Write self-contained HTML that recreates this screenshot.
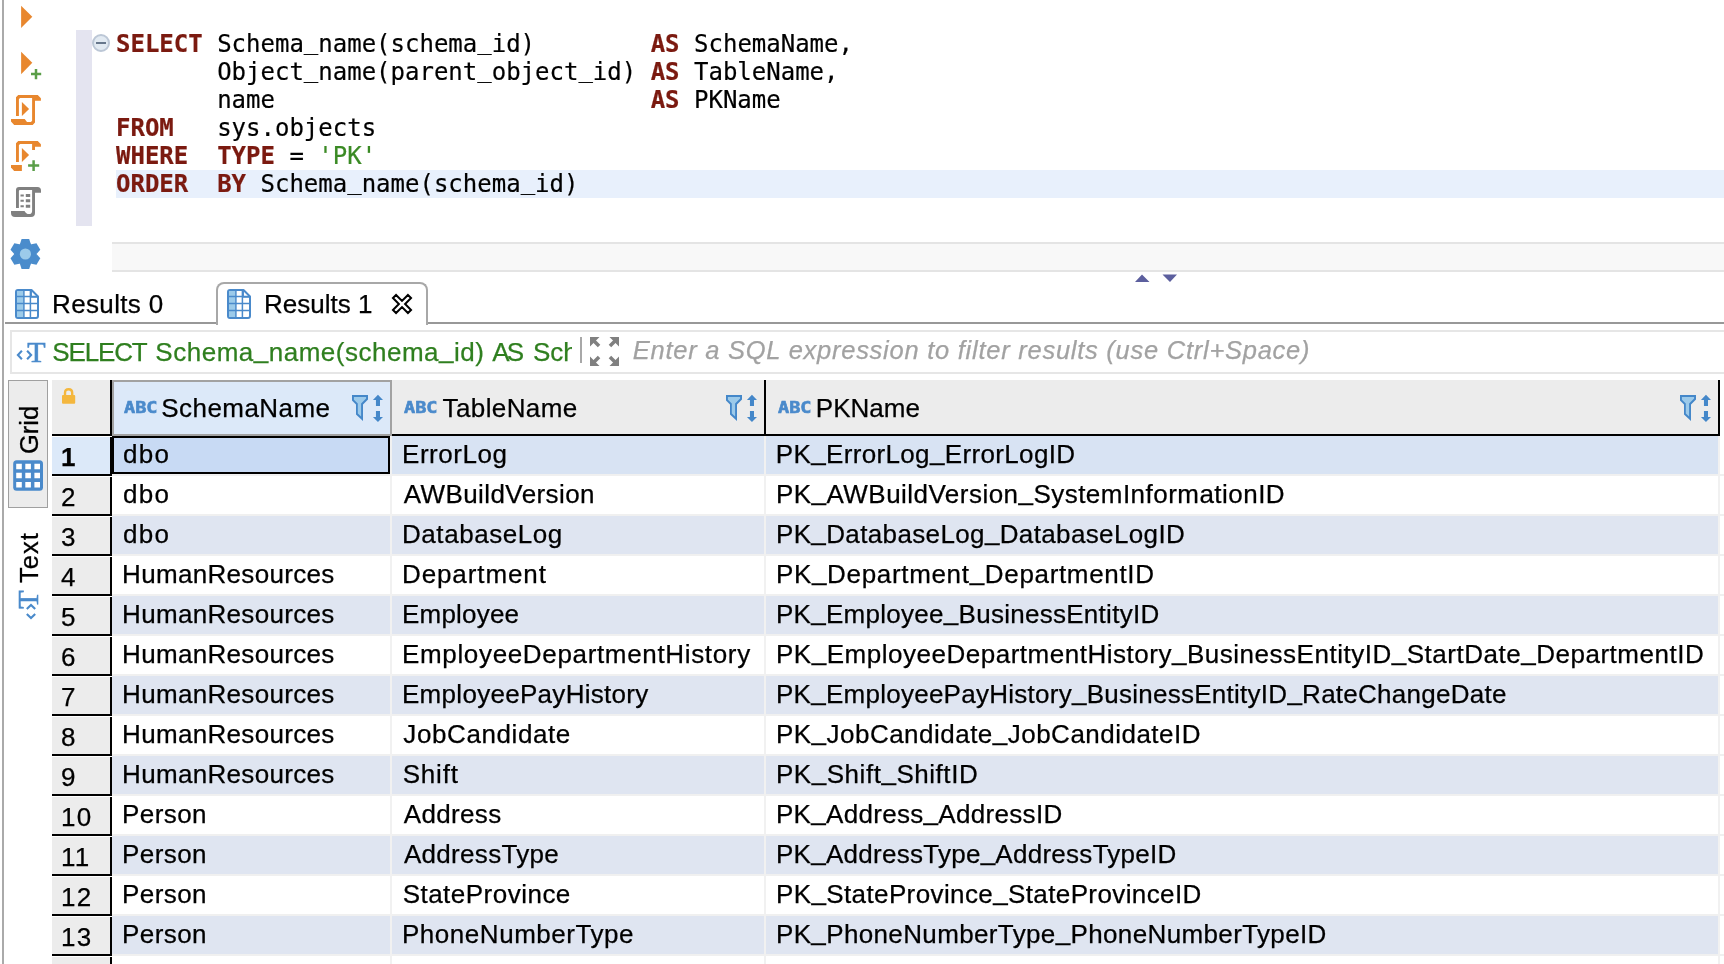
<!DOCTYPE html>
<html><head><meta charset="utf-8"><title>SQL Results</title>
<style>
html,body{margin:0;padding:0;background:#fff;}
body{will-change:transform;width:1724px;height:964px;overflow:hidden;position:relative;font-family:"Liberation Sans",sans-serif;color:#000;}
.abs{position:absolute;}
#vline{left:2px;top:0;width:2px;height:964px;background:#aaa;}
#gutter{left:76px;top:30px;width:16px;height:196px;background:#e4e4f0;}
#curline{left:116px;top:170px;width:1608px;height:28px;background:#e8f0fc;}
#code{-webkit-text-stroke:0.2px;left:116px;top:30px;font-family:"DejaVu Sans Mono","Liberation Mono",monospace;font-size:24px;line-height:28px;white-space:pre;color:#000;margin:0;}
#code b{color:#7b1a10;font-weight:bold;}
#code i{color:#3a8a24;font-style:normal;}
#hbar{left:112px;top:242px;width:1612px;height:26px;background:#f8f8f8;border-top:2px solid #e4e4e4;border-bottom:2px solid #e4e4e4;}
.ui{-webkit-text-stroke:0.25px;font-size:26px;white-space:nowrap;line-height:30px;}
#tabline1{left:5px;top:322px;width:213px;height:2px;background:#989898;}
#tabline2{left:427px;top:322px;width:1297px;height:2px;background:#989898;}
#tab1{left:216px;top:282px;width:208px;height:41px;border:2px solid #a8a8a8;border-bottom:none;border-radius:8px 8px 0 0;background:#fff;}
#filter{left:10px;top:330px;width:1720px;height:40px;border:2px solid #e6e6e6;background:#fff;}

#gridbg{left:112px;top:436px;width:1612px;height:528px;background:repeating-linear-gradient(to bottom,transparent 0,transparent 38px,#f0f0f0 38px,#f0f0f0 40px);}
.row{-webkit-text-stroke:0.25px;position:absolute;left:112px;width:1606px;height:38px;background:#fff;font-size:26px;line-height:30px;white-space:nowrap;}
.row.odd{background:#dfe5f1;}
.row.sel{background:#d8e3f3;}
.row span{position:absolute;top:3px;z-index:2;}
.c1{left:9px;}
.c2{left:289px;}
.c3{left:663px;}
.rn{position:absolute;left:-60px;top:1px;width:49px;height:34px;padding-left:9px;letter-spacing:1.3px;padding-top:3px;background:#ececec;border-right:2px solid #000;border-bottom:2px solid #000;line-height:34.5px;}
.row.sel .rn{background:#dce9f9;font-weight:bold;}
.vsep{top:436px;width:2px;height:528px;background:#f1f1f1;}
#selcell{z-index:1;left:112px;top:436px;width:274px;height:34px;border:2px solid #000;background:#c8daf4;}
#rnhead{left:52px;top:380px;width:58px;height:54px;background:#ececec;border-right:2px solid #000;border-bottom:2px solid #000;}
.hd{-webkit-text-stroke:0.25px;top:380px;height:54px;background:#ececec;border-bottom:2px solid #000;font-size:26px;line-height:30px;white-space:nowrap;}
.hd .lbl{position:absolute;top:13.45px;}
.abc{position:absolute;top:18.5px;font-family:"DejaVu Sans Mono",monospace;font-weight:bold;font-size:16px;line-height:18px;color:#4a8acb;letter-spacing:0px;-webkit-text-stroke:0.6px #4a8acb;display:inline-block;transform:scaleX(1.16);transform-origin:0 0;}
#h1{left:112px;width:276px;height:52px;background:#dce9f9;border:2px solid #a2a2a2;}
#h2{left:392px;width:372px;border-right:2px solid #000;}
#h3{left:766px;width:952px;border-right:2px solid #000;}
#gridtab{left:8px;top:380px;width:38px;height:126px;background:#ececec;border:1px solid #a0a0a0;}
.vtxt{-webkit-text-stroke:0.3px;font-size:25.5px;line-height:30px;white-space:nowrap;transform:rotate(-90deg);transform-origin:0 0;}
.g{position:absolute;top:0;}
u{text-decoration:none;position:relative;top:-3px;}
#code u{top:-3.5px;}
</style></head><body>
<div id="vline" class="abs"></div>
<div id="gutter" class="abs"></div>
<div id="curline" class="abs"></div>
<pre id="code" class="abs"><b>SELECT</b> Schema<u>_</u>name(schema<u>_</u>id)        <b>AS</b> SchemaName,
       Object<u>_</u>name(parent<u>_</u>object<u>_</u>id) <b>AS</b> TableName,
       name                          <b>AS</b> PKName
<b>FROM</b>   sys.objects
<b>WHERE</b>  <b>TYPE</b> = <i>'PK'</i>
<b>ORDER</b>  <b>BY</b> Schema<u>_</u>name(schema<u>_</u>id)</pre>
<div id="hbar" class="abs"></div>
<div id="tabline1" class="abs"></div>
<div id="tabline2" class="abs"></div>
<div id="tab1" class="abs"></div>
<div class="abs ui" id="t0" style="left:52.11px;top:289.35px;letter-spacing:0.343px">Results 0</div>
<div class="abs ui" id="t1" style="left:263.93px;top:289.35px;letter-spacing:0.009px">Results 1</div>
<div id="filter" class="abs"></div>
<div id="gridbg" class="abs"></div>
<div id="gridtab" class="abs"></div>
<div class="abs vtxt" style="left:13.8px;top:454px;">Grid</div>
<div class="abs vtxt" style="left:13.9px;top:583.2px;letter-spacing:1px">Text</div>
<div id="rnhead" class="abs"></div>
<div id="h1" class="abs hd"><span class="abc" style="left:10px;top:16.5px">ABC</span><span class="lbl" id="lbl1" style="left:47.28px;top:11.45px;letter-spacing:0.448px">SchemaName</span></div>
<div id="h2" class="abs hd"><span class="abc" style="left:12px">ABC</span><span class="lbl" id="lbl2" style="left:50.55px;letter-spacing:0.391px">TableName</span></div>
<div id="h3" class="abs hd"><span class="abc" style="left:12px">ABC</span><span class="lbl" id="lbl3" style="left:49.76px;letter-spacing:0.048px">PKName</span></div>
<!--ROWS_START--><div id="grid" class="abs">
<div class="row sel" style="top:436px"><div class="rn">1</div><span id="r1c1" style="left:11.01px;letter-spacing:1.280px">dbo</span><span id="r1c2" style="left:290.00px;letter-spacing:0.553px">ErrorLog</span><span id="r1c3" style="left:663.74px;letter-spacing:0.352px">PK<u>_</u>ErrorLog<u>_</u>ErrorLogID</span></div>
<div class="row" style="top:476px"><div class="rn">2</div><span id="r2c1" style="left:10.88px;letter-spacing:1.341px">dbo</span><span id="r2c2" style="left:291.72px;letter-spacing:0.414px">AWBuildVersion</span><span id="r2c3" style="left:663.93px;letter-spacing:0.468px">PK<u>_</u>AWBuildVersion<u>_</u>SystemInformationID</span></div>
<div class="row odd" style="top:516px"><div class="rn">3</div><span id="r3c1" style="left:10.89px;letter-spacing:1.331px">dbo</span><span id="r3c2" style="left:289.99px;letter-spacing:0.563px">DatabaseLog</span><span id="r3c3" style="left:663.94px;letter-spacing:0.363px">PK<u>_</u>DatabaseLog<u>_</u>DatabaseLogID</span></div>
<div class="row" style="top:556px"><div class="rn">4</div><span id="r4c1" style="left:10.04px;letter-spacing:0.325px">HumanResources</span><span id="r4c2" style="left:289.99px;letter-spacing:0.897px">Department</span><span id="r4c3" style="left:663.93px;letter-spacing:0.671px">PK<u>_</u>Department<u>_</u>DepartmentID</span></div>
<div class="row odd" style="top:596px"><div class="rn">5</div><span id="r5c1" style="left:10.04px;letter-spacing:0.324px">HumanResources</span><span id="r5c2" style="left:289.99px;letter-spacing:0.212px">Employee</span><span id="r5c3" style="left:663.94px;letter-spacing:0.277px">PK<u>_</u>Employee<u>_</u>BusinessEntityID</span></div>
<div class="row" style="top:636px"><div class="rn">6</div><span id="r6c1" style="left:10.04px;letter-spacing:0.325px">HumanResources</span><span id="r6c2" style="left:289.99px;letter-spacing:0.659px">EmployeeDepartmentHistory</span><span id="r6c3" style="left:663.93px;letter-spacing:0.518px">PK<u>_</u>EmployeeDepartmentHistory<u>_</u>BusinessEntityID<u>_</u>StartDate<u>_</u>DepartmentID</span></div>
<div class="row odd" style="top:676px"><div class="rn">7</div><span id="r7c1" style="left:10.04px;letter-spacing:0.324px">HumanResources</span><span id="r7c2" style="left:289.99px;letter-spacing:0.296px">EmployeePayHistory</span><span id="r7c3" style="left:663.94px;letter-spacing:0.262px">PK<u>_</u>EmployeePayHistory<u>_</u>BusinessEntityID<u>_</u>RateChangeDate</span></div>
<div class="row" style="top:716px"><div class="rn">8</div><span id="r8c1" style="left:10.04px;letter-spacing:0.325px">HumanResources</span><span id="r8c2" style="left:291.31px;letter-spacing:0.597px">JobCandidate</span><span id="r8c3" style="left:663.93px;letter-spacing:0.484px">PK<u>_</u>JobCandidate<u>_</u>JobCandidateID</span></div>
<div class="row odd" style="top:756px"><div class="rn">9</div><span id="r9c1" style="left:10.04px;letter-spacing:0.324px">HumanResources</span><span id="r9c2" style="left:290.67px;letter-spacing:0.808px">Shift</span><span id="r9c3" style="left:663.94px;letter-spacing:0.537px">PK<u>_</u>Shift<u>_</u>ShiftID</span></div>
<div class="row" style="top:796px"><div class="rn">10</div><span id="r10c1" style="left:10.04px;letter-spacing:0.434px">Person</span><span id="r10c2" style="left:291.72px;letter-spacing:0.342px">Address</span><span id="r10c3" style="left:663.93px;letter-spacing:0.310px">PK<u>_</u>Address<u>_</u>AddressID</span></div>
<div class="row odd" style="top:836px"><div class="rn">11</div><span id="r11c1" style="left:10.04px;letter-spacing:0.433px">Person</span><span id="r11c2" style="left:291.97px;letter-spacing:0.298px">AddressType</span><span id="r11c3" style="left:663.94px;letter-spacing:0.270px">PK<u>_</u>AddressType<u>_</u>AddressTypeID</span></div>
<div class="row" style="top:876px"><div class="rn">12</div><span id="r12c1" style="left:10.04px;letter-spacing:0.434px">Person</span><span id="r12c2" style="left:290.65px;letter-spacing:0.485px">StateProvince</span><span id="r12c3" style="left:663.93px;letter-spacing:0.386px">PK<u>_</u>StateProvince<u>_</u>StateProvinceID</span></div>
<div class="row odd" style="top:916px"><div class="rn">13</div><span id="r13c1" style="left:10.04px;letter-spacing:0.433px">Person</span><span id="r13c2" style="left:289.99px;letter-spacing:0.535px">PhoneNumberType</span><span id="r13c3" style="left:663.94px;letter-spacing:0.365px">PK<u>_</u>PhoneNumberType<u>_</u>PhoneNumberTypeID</span></div>
<div class="row" style="top:956px"><div class="rn">14</div></div>
</div><!--ROWS_END-->
<div class="abs vsep" style="left:390px"></div>
<div class="abs vsep" style="left:764px"></div>
<div class="abs vsep" style="left:1718px"></div>
<div id="selcell" class="abs"></div>
<!--GRID-->

<svg class="abs" style="left:0;top:0" width="60" height="280" viewBox="0 0 60 280">
<path d="M21.1,5.8 L32.3,16.8 L21.1,28 Z" fill="#e8872e"/>
<path d="M21.1,51.8 L32.3,62.8 L21.1,74.2 Z" fill="#e8872e"/>
<path d="M31,74 H41.2 M36,68.9 V79.2" stroke="#5a9e48" stroke-width="2.5" fill="none"/>
<g transform="translate(11,95)" fill="#e8872e"><path d="M7.2,0 L26.8,0 L29.9,3.2 L29.9,5.8 L24,5.8 L24,27.6 L21.7,29.9 L3.2,29.9 L0,26.6 L0,24 L13.7,24 L16,27.1 L19.9,27.1 L21.1,25.8 L21.1,3 L9,3 L7.9,4.3 L7.9,21 L5,21 L5,2.2 Z"/><path d="M10.9,6.9 L18.1,13.9 L10.9,21.1 Z"/></g>
<g transform="translate(11,141)" fill="#e8872e"><path d="M7.2,0 L26.8,0 L29.9,3.2 L29.9,5.8 L24,5.8 L24,9 L21.1,9 L21.1,3 L9,3 L7.9,4.3 L7.9,21 L5,21 L5,2.2 Z"/><path d="M0,24 L10.9,24 L10.9,29.9 L3.2,29.9 L0,26.6 Z"/><path d="M10.9,6.9 L18.1,13.9 L10.9,21.1 Z"/><path d="M17.1,24.6 H28.2 M22.6,19.2 V30" stroke="#5a9e48" stroke-width="2.5" fill="none"/></g>
<g transform="translate(11,187)" fill="#808080"><path d="M8,0 H26.5 Q30,0 30,3.5 V5.8 H24 V26 Q24,29.9 20,29.9 H4 Q0,29.9 0,26 V24 H13.5 Q15,27.1 18,27.1 Q21.1,27.1 21.1,24 V3 H9 Q7.9,3 7.9,4.3 V21 H5 V3 Q5,0 8,0 Z"/><path d="M9.5,7.4 h3.3 v2 h-3.3z M14.8,6.9 h4.4 v3 h-4.4z M9.5,12.8 h3.3 v2 h-3.3z M14.8,12.3 h4.4 v3 h-4.4z M9.5,18.2 h3.3 v2 h-3.3z M14.8,17.7 h4.4 v3 h-4.4z"/></g>
<g transform="translate(25.4,254)"><g fill="#4a8ccc"><circle r="11.4"/><g transform="rotate(0)"><path d="M-5.4,-10 L-3.8,-15 H3.8 L5.4,-10 Z"/></g><g transform="rotate(60)"><path d="M-5.4,-10 L-3.8,-15 H3.8 L5.4,-10 Z"/></g><g transform="rotate(120)"><path d="M-5.4,-10 L-3.8,-15 H3.8 L5.4,-10 Z"/></g><g transform="rotate(180)"><path d="M-5.4,-10 L-3.8,-15 H3.8 L5.4,-10 Z"/></g><g transform="rotate(240)"><path d="M-5.4,-10 L-3.8,-15 H3.8 L5.4,-10 Z"/></g><g transform="rotate(300)"><path d="M-5.4,-10 L-3.8,-15 H3.8 L5.4,-10 Z"/></g></g><circle r="5.6" fill="#9ccbea"/></g>
</svg>
<svg class="abs" style="left:91px;top:33px" width="20" height="20" viewBox="0 0 20 20"><circle cx="10" cy="10" r="8" fill="#e2eaf2" stroke="#bcc7d6" stroke-width="2"/><path d="M5,10 H15" stroke="#5a6a80" stroke-width="1.8"/></svg>
<svg class="abs" style="left:1130px;top:272px" width="52" height="12" viewBox="0 0 52 12"><path d="M5,10 L12,2.4 L19.5,10 Z M32.5,2.4 L47,2.4 L40,10 Z" fill="#5c5f9e"/></svg>
<svg width="0" height="0" style="position:absolute"><defs><g id="tbl"><path d="M3,1 H16.5 L23,7.5 V27 Q23,29 21,29 H3 Q1,29 1,27 V3 Q1,1 3,1Z" fill="#fff" stroke="#4a8acb" stroke-width="2" stroke-linejoin="round"/><rect x="2" y="2" width="6.6" height="26" fill="#9ccbea"/><path d="M8.9,2 V28 M15.4,2 V28 M2,7.6 H22 M2,14.6 H22 M2,21.6 H22" stroke="#4a8acb" stroke-width="1.5" fill="none"/><path d="M16.2,1.5 V8 H22.5" stroke="#4a8acb" stroke-width="1.5" fill="none"/></g><g id="fs"><path d="M1,1.05 H17 V5.4 L12,10.4 V27 L5,20.6 V10.4 L1,6.4 Z" fill="#4487c9"/><path d="M2.9,2.9 H15.1 V4.6 L10.1,9.4 V22.6 L6.8,19.5 V9.55 L2.9,5.8 Z" fill="#9ccaea"/><path d="M26.95,0.85 L32,5.9 H29 V11.9 H24.95 V5.9 H21.95 Z M26.95,28.1 L32,23 H29 V17 H24.95 V23 H21.95 Z" fill="#4487c9"/></g><g id="ct"><path d="M7.6,8.2 L2.7,13 L7.6,17.8 M11.2,8.2 L16.1,13 L11.2,17.8" fill="none" stroke="#4a8acb" stroke-width="2"/></g></defs></svg>

<svg class="abs" style="left:15px;top:289px" width="24" height="30" viewBox="0 0 24 30"><use href="#tbl"/></svg>
<svg class="abs" style="left:227px;top:289px" width="24" height="30" viewBox="0 0 24 30"><use href="#tbl"/></svg>
<svg class="abs" style="left:390.8px;top:293px" width="22" height="22" viewBox="0 0 22 22"><path d="M16.94,1.95 L20.05,5.06 L14.11,11.00 L20.05,16.94 L16.94,20.05 L11.00,14.11 L5.06,20.05 L1.95,16.94 L7.89,11.00 L1.95,5.06 L5.06,1.95 L11.00,7.89 Z" fill="#fff" stroke="#000" stroke-width="2" stroke-linejoin="miter"/></svg>
<svg class="abs" style="left:351px;top:394px" width="34" height="30" viewBox="0 0 34 30"><use href="#fs"/></svg>
<svg class="abs" style="left:725px;top:394px" width="34" height="30" viewBox="0 0 34 30"><use href="#fs"/></svg>
<svg class="abs" style="left:1679px;top:394px" width="34" height="30" viewBox="0 0 34 30"><use href="#fs"/></svg>
<svg class="abs" style="left:61px;top:387px" width="16" height="18" viewBox="0 0 16 18"><path d="M4,9 V6 Q4,2.2 7.6,2.2 Q11.2,2.2 11.2,6 V9" fill="none" stroke="#f4b73e" stroke-width="2.4"/><rect x="1" y="8" width="13.2" height="8.8" rx="1" fill="#f4b73e"/></svg>
<svg class="abs" style="left:13px;top:460px" width="30" height="31" viewBox="0 0 30 31"><rect x="0.2" y="0.3" width="29.8" height="30.4" rx="3.5" fill="#4a8acb"/><path d="M3.2,3.8 h5.6 v5.5 h-5.6z M12.3,3.8 h5.6 v5.5 h-5.6z M21.4,3.8 h5.6 v5.5 h-5.6z M3.2,12.8 h5.6 v5.5 h-5.6z M12.3,12.8 h5.6 v5.5 h-5.6z M21.4,12.8 h5.6 v5.5 h-5.6z M3.2,22 h5.6 v5.5 h-5.6z M12.3,22 h5.6 v5.5 h-5.6z M21.4,22 h5.6 v5.5 h-5.6z" fill="#fff"/></svg>
<div class="abs" id="fico" style="left:14px;top:340px;width:36px;height:26px;"><svg class="abs" style="left:0;top:0" width="22" height="26" viewBox="0 0 22 26"><path d="M7.9,10.8 L3.9,15 L7.9,19.2 M13.1,10.8 L17.1,15 L13.1,19.2" fill="none" stroke="#4a8acb" stroke-width="2.1"/></svg><span style="position:absolute;left:13.2px;top:-5.1px;font-family:'Liberation Serif',serif;-webkit-text-stroke:0.6px #4a8acb;font-size:30px;line-height:34px;color:#4a8acb;">T</span></div>
<div class="abs ui" id="ftxt" style="left:48px;top:337px;width:524px;height:32px;overflow:hidden;color:#2f7f1f;"><span class="g" id="g1" style="left:4.25px;letter-spacing:-1.140px">SELECT</span> <span class="g" id="g2" style="left:107.35px;letter-spacing:0.506px">Schema<u>_</u>name(schema<u>_</u>id)</span> <span class="g" id="g3" style="left:444.30px;letter-spacing:-2.911px">AS</span> <span class="g" id="g4" style="left:485px">SchemaName</span></div>
<div class="abs" style="left:580px;top:337px;width:2px;height:26px;background:#a8a8a8;"></div>
<svg class="abs" style="left:590px;top:337px" width="29" height="29" viewBox="0 0 29 29"><g fill="#808080"><path d="M0,0 H9.5 L0,9.5Z M29,0 V9.5 L19.5,0Z M0,29 V19.5 L9.5,29Z M29,29 H19.5 L29,19.5Z"/><path d="M2,4.5 L4.5,2 L10.3,7.8 L7.8,10.3Z M27,4.5 L24.5,2 L18.7,7.8 L21.2,10.3Z M2,24.5 L4.5,27 L10.3,21.2 L7.8,18.7Z M27,24.5 L24.5,27 L18.7,21.2 L21.2,18.7Z"/></g></svg>
<div class="abs ui" id="ph" style="left:632.79px;top:335px;font-style:italic;font-size:25.5px;color:#a2a2a2;letter-spacing:0.742px;">Enter a SQL expression to filter results (use Ctrl+Space)</div>
<div class="abs" id="tico" style="left:16px;top:621.7px;width:36px;height:26px;transform:rotate(-90deg);transform-origin:0 0;"><svg class="abs" style="left:0;top:0" width="22" height="26" viewBox="0 0 22 26"><path d="M7.9,10.8 L3.9,15 L7.9,19.2 M13.1,10.8 L17.1,15 L13.1,19.2" fill="none" stroke="#4a8acb" stroke-width="2.1"/></svg><span style="position:absolute;left:13.2px;top:-5.1px;font-family:'Liberation Serif',serif;-webkit-text-stroke:0.6px #4a8acb;font-size:30px;line-height:34px;color:#4a8acb;">T</span></div>
<!--ICONS-->
</body></html>
